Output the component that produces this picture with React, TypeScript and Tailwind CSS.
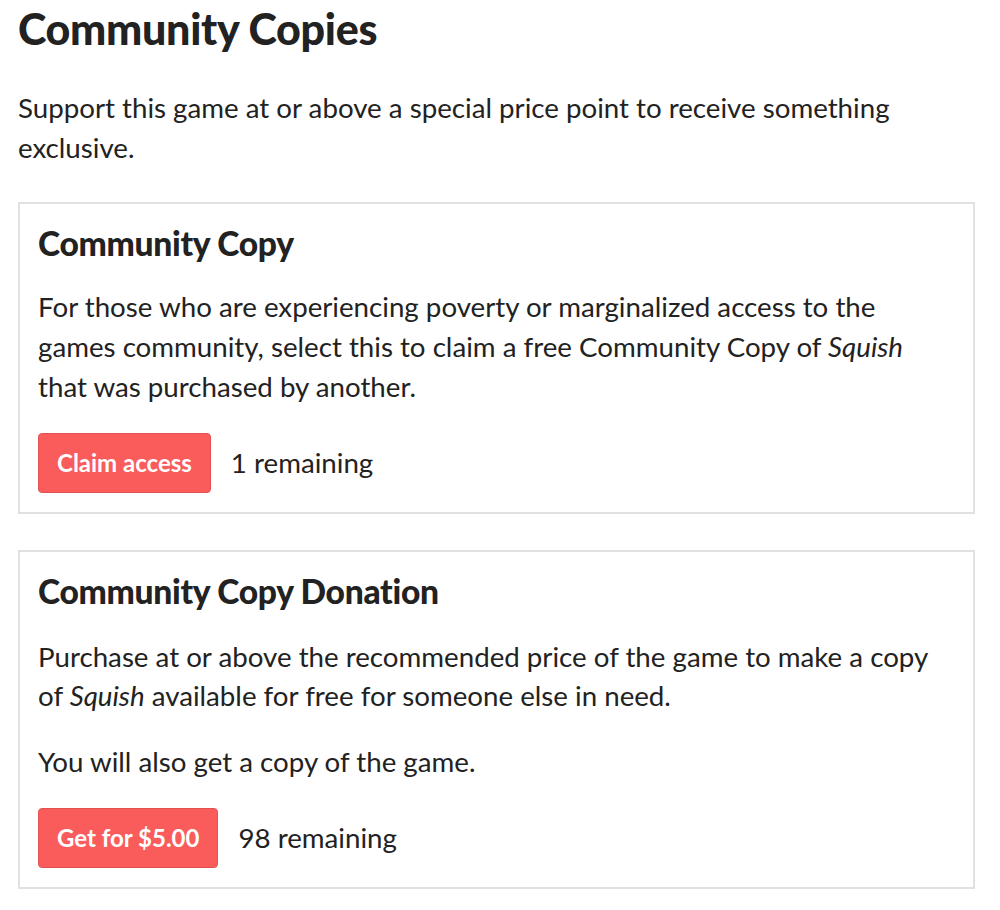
import React from 'react';

interface RewardCardProps {
  title: string;
  children: React.ReactNode;
  buttonLabel: string;
  remaining: number;
  bodyGap: string;
}

const RewardCard: React.FC<RewardCardProps> = ({ title, children, buttonLabel, remaining, bodyGap }) => {
  return (
    <div className="border-2 border-[#e1e1e1] bg-white px-[18px] pt-[20px] pb-[19px]">
      <h3 className="text-[33.6px] leading-[38px] font-black tracking-[-0.3px] text-[#222]">{title}</h3>
      <div className={bodyGap}>{children}</div>
      <div className="mt-[26px] flex items-center gap-5">
        <button className="h-[60px] px-[18px] rounded-[4px] bg-[#fa5c5c] border border-[#e35252] text-white text-[24px] font-bold">
          {buttonLabel}
        </button>
        <span className="text-[27.7px] text-[#222]">{remaining} remaining</span>
      </div>
    </div>
  );
};

export default function App() {
  return (
    <div className="min-h-screen bg-white pl-[18px] pr-[25px] pt-[4px] text-[#222]" style={{ fontFamily: 'Lato, "Noto Sans", sans-serif' }}>
      <h2 className="text-[43px] leading-[50px] font-black tracking-[-0.3px]">Community Copies</h2>

      <p className="mt-[34px] text-[27.7px] leading-[40px]">
        Support this game at or above a special price point to receive something exclusive.
      </p>

      <div className="mt-[34px] flex flex-col gap-[36px]">
        <RewardCard title="Community Copy" buttonLabel="Claim access" remaining={1} bodyGap="mt-[25px]">
          <p className="text-[27.7px] leading-[40px]">
            For those who are experiencing poverty or marginalized access to the games community, select this to
            claim a free Community Copy of <em>Squish</em> that was purchased by another.
          </p>
        </RewardCard>

        <RewardCard title="Community Copy Donation" buttonLabel="Get for $5.00" remaining={98} bodyGap="mt-[27px] flex flex-col gap-[27px]">
          <p className="text-[27.7px] leading-[39px]">
            Purchase at or above the recommended price of the game to make a copy of <em>Squish</em> available for
            free for someone else in need.
          </p>
          <p className="text-[27.7px] leading-[40px]">You will also get a copy of the game.</p>
        </RewardCard>
      </div>
    </div>
  );
}
